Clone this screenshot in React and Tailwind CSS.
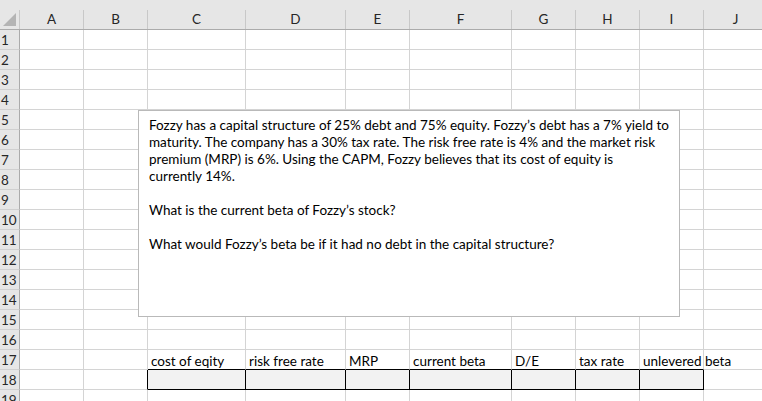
import React from 'react';

const columns = [
  { key: 'A', w: 'w-[64px]' },
  { key: 'B', w: 'w-[64px]' },
  { key: 'C', w: 'w-[98px]' },
  { key: 'D', w: 'w-[100px]' },
  { key: 'E', w: 'w-[64px]' },
  { key: 'F', w: 'w-[102px]' },
  { key: 'G', w: 'w-[64px]' },
  { key: 'H', w: 'w-[64px]' },
  { key: 'I', w: 'w-[64px]' },
  { key: 'J', w: 'w-[64px]' },
];

const labels = {
  C: 'cost of eqity',
  D: 'risk free rate',
  E: 'MRP',
  F: 'current beta',
  G: 'D/E',
  H: 'tax rate',
  I: 'unlevered beta',
};

const inputCols = ['C', 'D', 'E', 'F', 'G', 'H', 'I'];

function Cell({ col, row }) {
  const isInput = inputCols.includes(col.key);
  let cls = `${col.w} shrink-0 h-full border-r border-b border-[#d4d4d4] relative`;
  if (row === 17 && isInput) cls += ' !border-b-black';
  if (row === 18 && isInput) cls += ' bg-[#f2f2f2] !border-r-black !border-b-black';
  if (row === 18 && col.key === 'B') cls += ' !border-r-black';

  return (
    <div className={cls}>
      {row === 17 && labels[col.key] && (
        <span className="absolute z-10 left-[3px] bottom-0 whitespace-nowrap text-[13.5px] leading-[16px] text-black">
          {labels[col.key]}
        </span>
      )}
    </div>
  );
}

export default function App() {
  const rows = Array.from({ length: 19 }, (_, i) => i + 1);

  return (
    <div className="relative w-[762px] h-[401px] overflow-hidden bg-white font-['Lato','Liberation_Sans',sans-serif]">
      <div className="h-[10px] bg-[#e6e6e6]" />

      {/* column headers */}
      <div className="flex h-[20px] bg-[#e6e6e6] border-b border-[#ababab]">
        <div className="w-[20px] shrink-0 h-full border-r border-[#c8c8c8] flex items-center justify-center">
          <svg width="13" height="13" viewBox="0 0 13 13">
            <polygon points="13,0 13,13 0,13" fill="#b4b4b4" />
          </svg>
        </div>
        {columns.map((col) => (
          <div
            key={col.key}
            className={`${col.w} shrink-0 h-full border-r border-[#c8c8c8] flex items-center justify-center text-[13.5px] text-[#262626]`}
          >
            {col.key}
          </div>
        ))}
      </div>

      {/* grid rows */}
      {rows.map((row) => (
        <div key={row} className="flex h-[20px]">
          <div className="w-[20px] shrink-0 h-full bg-[#e6e6e6] border-r border-[#ababab] border-b border-b-[#d0d0d0] flex items-center pl-[1px] pt-[1px] text-[13.5px] text-[#262626]">
            {row}
          </div>
          {columns.map((col) => (
            <Cell key={col.key} col={col} row={row} />
          ))}
        </div>
      ))}

      {/* text box */}
      <div className="absolute left-[138px] top-[110px] w-[542px] h-[207px] bg-white border border-[#b9b9b9] pl-[10px] pt-[6px] text-[13.5px] leading-[17px] text-black">
        <p>
          Fozzy has a capital structure of 25% debt and 75% equity. Fozzy’s debt has a 7% yield to
          <br />
          maturity. The company has a 30% tax rate. The risk free rate is 4% and the market risk
          <br />
          premium (MRP) is 6%. Using the CAPM, Fozzy believes that its cost of equity is
          <br />
          currently 14%.
        </p>
        <p className="mt-[17px]">What is the current beta of Fozzy’s stock?</p>
        <p className="mt-[17px]">What would Fozzy’s beta be if it had no debt in the capital structure?</p>
      </div>
    </div>
  );
}
